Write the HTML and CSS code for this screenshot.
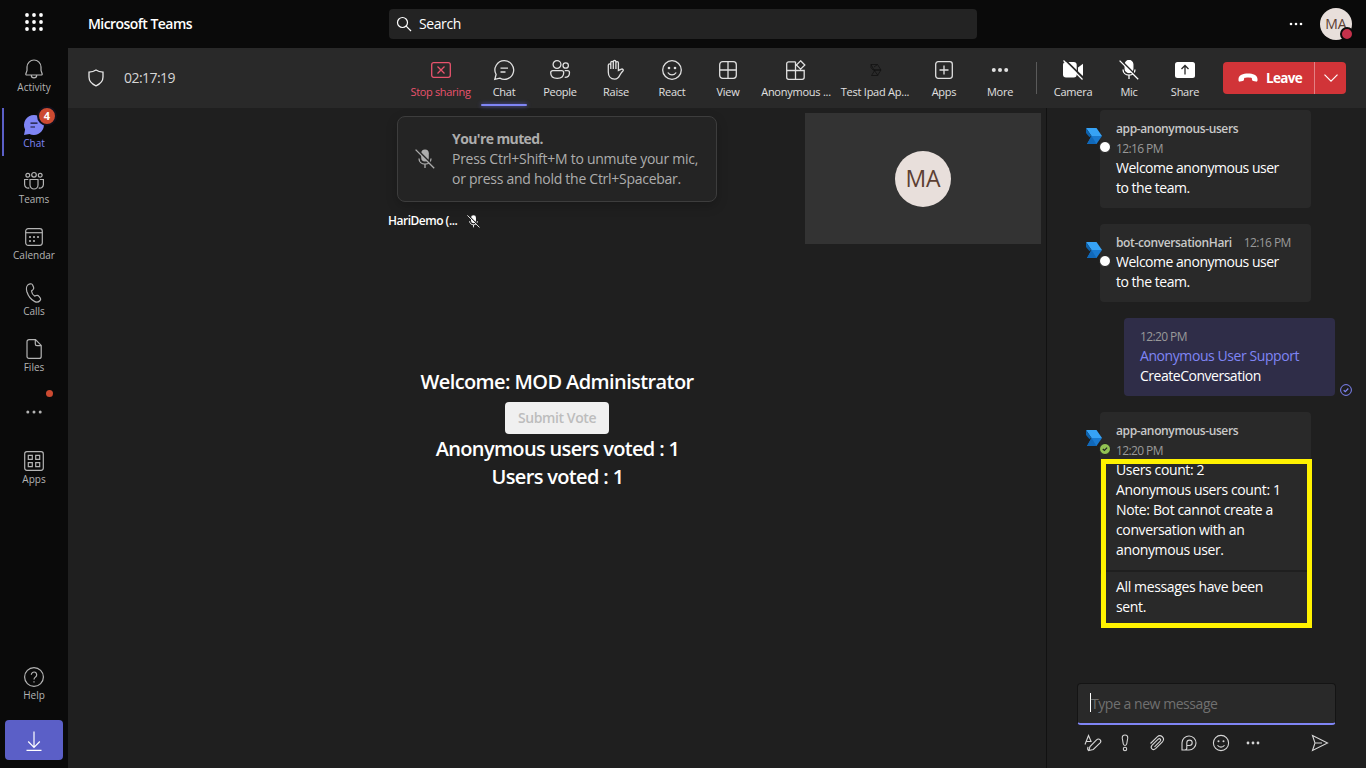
FILE: index.html
```
<!DOCTYPE html>
<html lang="en">
<head>
<meta charset="utf-8">
<title>Microsoft Teams</title>
<link rel="stylesheet" href="styles.css">
</head>
<body>
<svg class="defs" width="0" height="0">
  <symbol id="mic-off" viewBox="0 0 20 20">
    <rect x="6.2" y=".5" width="7.600" height="12" rx="3.800" fill="currentColor"/>
    <path d="M4 9.500c0 3.300 2.600 5.600 6 5.600s6-2.300 6-5.600M10 15v4" fill="none" stroke="currentColor" stroke-width="1.300"/>
    <path d="M1.600 0L20 18.400" stroke="#292929" stroke-width="1.800"/>
    <path d="M.6.6L19.200 19.200" stroke="currentColor" stroke-width="1.300"/>
  </symbol>
  <symbol id="bot" viewBox="0 0 16 16">
    <path d="M0 0h10.500L16 8H5.500z" fill="#36a2f5"/>
    <path d="M0 0v5l3.300 4L5.500 8z" fill="#0d62ad"/>
    <path d="M5.500 8H16l-5.500 8H1z" fill="#1979cf"/>
    <path d="M5.500 8L1 16h9.500z" fill="#1068b9"/>
  </symbol>
</svg>
<header class="topbar">
  <svg class="waffle" width="20" height="20" viewBox="0 0 20 20" fill="#fff"><circle cx="3" cy="3" r="1.900"/><circle cx="10" cy="3" r="1.900"/><circle cx="17" cy="3" r="1.900"/><circle cx="3" cy="10" r="1.900"/><circle cx="10" cy="10" r="1.900"/><circle cx="17" cy="10" r="1.900"/><circle cx="3" cy="17" r="1.900"/><circle cx="10" cy="17" r="1.900"/><circle cx="17" cy="17" r="1.900"/></svg>
  <div class="brand">Microsoft Teams</div>
  <div class="search">
    <svg width="16" height="16" viewBox="0 0 16 16" fill="none" stroke="#fff" stroke-width="1.200"><circle cx="6.500" cy="6.500" r="5"/><path d="M10.200 10.200L15 15"/></svg>
    <span>Search</span>
  </div>
  <svg class="topdots" width="14" height="4" viewBox="0 0 14 4" fill="#fff"><circle cx="2" cy="2" r="1.300"/><circle cx="7" cy="2" r="1.300"/><circle cx="12" cy="2" r="1.300"/></svg>
  <div class="avatar"><span>MA</span><i class="presence"></i></div>
</header>
<div class="app">
  <nav class="rail">
    <div class="nav"><svg width="20" height="20" viewBox="0 0 20 20"><path d="M3 8a7 7 0 0 1 14 0v3.500l1.200 3.500a.8.8 0 0 1-.8 1H2.600a.8.8 0 0 1-.8-1L3 11.500zM7.300 16.200a2.700 2.700 0 0 0 5.400 0"/></svg><span>Activity</span></div>
    <div class="nav active"><svg width="20" height="20" viewBox="0 0 20 20"><path class="fill" d="M10 0a10 10 0 1 1-4.600 18.900L0 20l1.100-5.400A10 10 0 0 1 10 0z"/><path class="ink" d="M6.500 8.200h7M6.500 12h4.500"/></svg><span>Chat</span><b class="badge">4</b></div>
    <div class="nav"><svg width="20" height="20" viewBox="0 0 20 20"><circle cx="10" cy="3.800" r="2.300"/><circle cx="3.800" cy="4.300" r="1.900"/><circle cx="16.200" cy="4.300" r="1.900"/><path d="M6 8.500h8v5.500a4 4 0 0 1-8 0zM4.300 8.500H.6v5a3.600 3.600 0 0 0 4.700 3.400M15.700 8.500h3.700v5a3.600 3.600 0 0 1-4.700 3.400"/></svg><span>Teams</span></div>
    <div class="nav"><svg width="20" height="20" viewBox="0 0 20 20"><rect x="1.700" y="1.700" width="16.600" height="16.600" rx="2.500"/><path d="M1.700 5.700h16.600"/><g class="fill"><circle cx="6" cy="10" r="1.100"/><circle cx="10" cy="10" r="1.100"/><circle cx="14" cy="10" r="1.100"/><circle cx="6" cy="14" r="1.100"/><circle cx="10" cy="14" r="1.100"/></g></svg><span>Calendar</span></div>
    <div class="nav"><svg width="20" height="20" viewBox="0 0 20 20"><path d="M5.200 1.100l1.300-.3c1-.2 1.700.2 2.100 1.100l1 2.300c.4 1 .1 1.700-.6 2.400L7.500 8c.2 1.800 1.700 4.100 3.100 5l2-.6c.9-.3 1.700 0 2.200.7l1.500 2c.6.8.4 1.700-.2 2.400-1.300 1.500-3.200 2.100-5.300 1.100C7.500 17 4.300 13.200 2.800 8.500c-.8-3-.2-6.500 2.400-7.400z"/></svg><span>Calls</span></div>
    <div class="nav"><svg width="20" height="20" viewBox="0 0 20 20"><path d="M5 .7h6.500l5.700 5.700v11a2 2 0 0 1-2 2H5a2 2 0 0 1-2-2V2.700a2 2 0 0 1 2-2zM11.300.7v4.200a1.700 1.700 0 0 0 1.700 1.700h4.200"/></svg><span>Files</span></div>
    <div class="nav more"><svg width="16" height="4" viewBox="0 0 16 4"><g class="fill"><circle cx="1.800" cy="2" r="1.500"/><circle cx="8" cy="2" r="1.500"/><circle cx="14.200" cy="2" r="1.500"/></g></svg><i class="dot"></i></div>
    <div class="nav"><svg width="20" height="20" viewBox="0 0 20 20"><rect x=".7" y=".7" width="18.600" height="18.600" rx="2.200"/><path d="M4.300 4.300h4v4h-4zM11.700 4.300h4v4h-4zM4.300 11.700h4v4h-4zM11.700 11.700h4v4h-4z"/></svg><span>Apps</span></div>
    <div class="nav help"><svg width="20" height="20" viewBox="0 0 20 20"><circle cx="10" cy="10" r="9.400"/><path d="M7.300 7.700a2.700 2.700 0 1 1 4.300 2.200c-1 .8-1.600 1.300-1.600 2.600M10 14.200v1.400"/></svg><span>Help</span></div>
    <div class="download"><svg width="16" height="20" viewBox="0 0 16 20" fill="none" stroke="#fff" stroke-width="1.200"><path d="M8 .5v15.500M2.200 10.500L8 16.300l5.800-5.800M.5 19.400h15"/></svg></div>
  </nav>
  <main class="main">
    <div class="toolbar">
      <svg class="shield" width="16" height="18" viewBox="0 0 16 18" fill="none" stroke="#e8e8e8" stroke-width="1.300"><path d="M8 1c2 1.400 4.300 2 7 2.100V8c0 4-2.400 6.800-7 8.800C3.400 14.800 1 12 1 8V3.100C3.700 3 6 2.400 8 1z"/></svg>
      <span class="timer">02:17:19</span>
      <div class="tool stop"><svg width="20" height="20" viewBox="0 0 20 20"><rect x=".7" y="2.700" width="18.600" height="14.600" rx="2"/><path d="M6.500 6.500l7 7M13.500 6.500l-7 7"/></svg><span>Stop sharing</span></div>
      <div class="tool current"><svg width="20" height="20" viewBox="0 0 20 20"><path d="M10.300.7a9.300 9.300 0 1 1-4.500 17.400L.8 19.300l1.300-4.800A9.300 9.300 0 0 1 10.300.7zM6.500 8.200h7.500M6.500 12h5"/></svg><span>Chat</span></div>
      <div class="tool"><svg width="20" height="20" viewBox="0 0 20 20"><circle cx="7" cy="4.500" r="3.900"/><circle cx="15.700" cy="5.500" r="2.700"/><path d="M2.700 10.700h9a2 2 0 0 1 2 2c0 3.500-2.500 5.600-6.500 5.600S.7 16.200.7 12.700a2 2 0 0 1 2-2zM14.700 10.700h2.800a2 2 0 0 1 2 2c0 3-1.700 4.700-4.800 4.700"/></svg><span>People</span></div>
      <div class="tool"><svg width="20" height="20" viewBox="0 0 20 20"><path d="M2.300 12V5.200c0-1.700 2.500-1.700 2.500 0V9M4.800 9V2.500C4.800.9 7.300.9 7.300 2.500V9M7.300 9V1.700c0-1.600 2.600-1.600 2.600 0V9M9.900 9V2.800c0-1.600 2.500-1.600 2.500 0v7.600l3.100-1.300c1.100-.4 2.300.8 1.600 1.600-1.700 1.500-2.400 2.600-3.200 4.400-1 2.400-2.500 4-5.300 4-4 0-6.300-2.900-6.300-7.100"/></svg><span>Raise</span></div>
      <div class="tool"><svg width="20" height="20" viewBox="0 0 20 20"><circle cx="10" cy="10" r="9.300"/><g class="fill"><circle cx="7" cy="8" r="1.300"/><circle cx="13" cy="8" r="1.300"/></g><path d="M5.800 12.500c2 3.200 6.400 3.200 8.400 0"/></svg><span>React</span></div>
      <div class="tool"><svg width="20" height="20" viewBox="0 0 20 20"><rect x="1.700" y="1.700" width="16.600" height="16.600" rx="3"/><path d="M10 1.700v16.600M1.700 10h16.600"/></svg><span>View</span></div>
      <div class="tool anon"><svg width="20" height="20" viewBox="0 0 20 20"><path d="M9.500 1.800H2.700a2 2 0 0 0-2 2v13.500a2 2 0 0 0 2 2h13.500a2 2 0 0 0 2-2v-6.800H.7M9.500 1.800v17.500M14.600.8l4.200 4.200-4.200 4.200L10.400 5z"/></svg><span>Anonymous ...</span></div>
      <div class="tool test"><svg width="20" height="20" viewBox="0 0 20 20"><path class="dark" d="M6 4.500h6.500L16 10H9zM6 4.500v3L8 10h8l-3.500 5.500H6.500L10 10M9 10l4 5.500M12.500 4.500L9 7"/></svg><span>Test Ipad Ap...</span></div>
      <div class="tool apps"><svg width="20" height="20" viewBox="0 0 20 20"><rect x="1.700" y="1.700" width="16.600" height="16.600" rx="2.500"/><path d="M10 5.500v9M5.500 10h9"/></svg><span>Apps</span></div>
      <div class="tool overflow"><svg width="20" height="20" viewBox="0 0 20 20"><g class="fill"><circle cx="3.800" cy="10" r="2"/><circle cx="10" cy="10" r="2"/><circle cx="16.200" cy="10" r="2"/></g></svg><span>More</span></div>
      <i class="divider"></i>
      <div class="tool device"><svg width="20" height="20" viewBox="0 0 20 20"><rect class="solid" y="2" width="13.700" height="15.500" rx="3"/><path class="solid" d="M15 7.500L20 3.700v12.600l-5-3.800z"/><path class="gap" d="M1.800-.3L20.500 18"/><path d="M.5.500l19 19"/></svg><span>Camera</span></div>
      <div class="tool device"><svg width="20" height="20"><use href="#mic-off"/></svg><span>Mic</span></div>
      <div class="tool device"><svg width="20" height="20" viewBox="0 0 20 20"><rect class="solid" y="2" width="20" height="16" rx="2.500"/><path class="up" d="M10 14.500V6M6.500 9L10 5.500 13.500 9"/></svg><span>Share</span></div>
      <div class="leave">
        <div class="hang"><svg width="20" height="10" viewBox="0 0 20 10"><path fill="#fff" d="M10 .5c4.800 0 9.500 1.700 9.500 5.500v1.300c0 1-.6 1.500-1.500 1.300l-2.700-.6c-.9-.2-1.200-.7-1.300-1.500l-.2-1.500C12 4.200 8 4.200 6.200 5L6 6.500C5.900 7.300 5.600 7.800 4.700 8L2 8.600C1.100 8.800.5 8.300.5 7.300V6C.5 2.200 5.200.5 10 .5z"/></svg><span>Leave</span></div>
        <div class="chev"><svg width="14" height="8" viewBox="0 0 14 8" fill="none" stroke="#fff" stroke-width="1.200"><path d="M.5.700L7 7.200 13.500.7"/></svg></div>
      </div>
    </div>
    <div class="content">
      <section class="stage">
        <div class="vote">
          <h2>Welcome: MOD Administrator</h2>
          <button class="submit" disabled>Submit Vote</button>
          <h2 class="count">Anonymous users voted : 1</h2>
          <h2 class="count">Users voted : 1</h2>
        </div>
        <div class="speaker"><span>HariDemo (...</span><svg width="13" height="13"><use href="#mic-off"/></svg></div>
        <div class="toast">
          <svg width="20" height="20"><use href="#mic-off"/></svg>
          <div><strong>You're muted.</strong><p>Press Ctrl+Shift+M to unmute your mic,</p><p>or press and hold the Ctrl+Spacebar.</p></div>
        </div>
        <div class="tile"><div class="bigavatar">MA</div></div>
      </section>
      <aside class="chat">
        <div class="messages">
          <article class="msg first">
            <svg class="bot" width="16" height="16"><use href="#bot"/></svg><i class="status"></i>
            <div class="author">app-anonymous-users</div><div class="time">12:16 PM</div>
            <div class="body"><p>Welcome anonymous user</p><p>to the team.</p></div>
          </article>
          <article class="msg second">
            <svg class="bot" width="16" height="16"><use href="#bot"/></svg><i class="status"></i>
            <div class="line"><div class="author">bot-conversationHari</div><div class="time">12:16 PM</div></div>
            <div class="body"><p>Welcome anonymous user</p><p>to the team.</p></div>
          </article>
          <article class="msg own">
            <div class="time">12:20 PM</div>
            <div class="body"><p class="mention">Anonymous User Support</p><p>CreateConversation</p></div>
            <svg class="seen" width="12" height="12" viewBox="0 0 12 12" fill="none" stroke="#7f85f5"><circle cx="6" cy="6" r="5.400"/><path d="M3.700 6.200l1.600 1.500 3-3.200" stroke-width="1.200"/></svg>
          </article>
          <article class="msg last">
            <svg class="bot" width="16" height="16"><use href="#bot"/></svg>
            <svg class="status online" viewBox="0 0 10 10"><path d="M2.800 5l1.600 1.500 2.700-2.800" fill="none" stroke="#222" stroke-width="1.200"/></svg>
            <div class="author">app-anonymous-users</div><div class="time">12:20 PM</div>
            <div class="body loose"><p>Users count: 2</p><p>Anonymous users count: 1</p><p>Note: Bot cannot create a</p><p>conversation with an</p><p>anonymous user.</p></div>
          </article>
          <article class="msg tail loose"><p>All messages have been</p><p>sent.</p></article>
          <div class="highlight"></div>
        </div>
        <div class="compose"><i class="caret"></i><span>Type a new message</span></div>
        <div class="actions">
          <svg width="18" height="18" viewBox="0 0 18 18"><path d="M1 10.500L4.500 1.500 7.300 8M2.200 7.500h4.500M4.800 16.500l1.200-4L12.800 5.700a2.200 2.200 0 0 1 3.300 3.100L9.300 15.500zM4.800 16.500c-1.500-.5-1.500-2.500-.5-3.500"/></svg>
          <svg width="18" height="18" viewBox="0 0 18 18"><path d="M9 1c2 0 3 1.400 2.700 3.400l-1 5.600c-.3 1.800-3.100 1.800-3.400 0l-1-5.600C6 2.400 7 1 9 1z"/><circle cx="9" cy="15" r="1.700"/></svg>
          <svg width="18" height="18" viewBox="0 0 18 18"><path d="M2.500 9.500L9.200 2.800c3.500-3.200 8.400 1.400 5.200 5l-6.800 6.900c-2.700 2.300-5.800-.7-3.700-3.400l6.300-6.200c1.700-1.300 3.400.5 2 2.100l-5.700 5.700"/></svg>
          <svg width="18" height="18" viewBox="0 0 18 18"><path d="M2 16V8.700a7 7 0 1 1 7 7.300zM2 16h2.800a2 2 0 0 0 2-2V8.700a2.700 2.700 0 1 1 2.700 2.800H7"/></svg>
          <svg width="18" height="18" viewBox="0 0 18 18"><circle cx="9" cy="9" r="7.600"/><path d="M5.500 11.300c1.700 2.400 5.300 2.400 7 0"/><g class="fill"><circle cx="6.500" cy="7.300" r="1"/><circle cx="11.500" cy="7.300" r="1"/></g></svg>
          <svg width="18" height="18" viewBox="0 0 18 18"><g class="fill"><circle cx="4" cy="9" r="1.400"/><circle cx="9" cy="9" r="1.400"/><circle cx="14" cy="9" r="1.400"/></g></svg>
          <svg class="send" width="18" height="18" viewBox="0 0 18 18"><path d="M1.500 1.500L16.500 9l-15 7.500L4 9zM4 9h7"/></svg>
        </div>
      </aside>
    </div>
  </main>
</div>
</body>
</html>
```
FILE: styles.css
```
* { box-sizing: border-box; }
body { margin: 0; width: 1366px; height: 768px; overflow: hidden; background: #0a0a0a; color: #fff; font-family: "Open Sans", "Noto Sans", sans-serif; font-size: 14px; display: flex; flex-direction: column; }
p, h2 { margin: 0; white-space: nowrap; }
span, .author, .time { white-space: nowrap; }
svg { flex: none; overflow: visible; }
.defs { display: none; }
i { font-style: normal; }

.topbar { height: 48px; flex: none; display: flex; align-items: center; }
.waffle { margin: -4px 0 0 24px; }
.brand { width: 301px; margin-left: 44px; padding-bottom: 1px; font-weight: 600; letter-spacing: -.55px; }
.search { width: 588px; height: 30px; border-radius: 4px; background: #232323; display: flex; align-items: center; gap: 7px; padding-left: 7px; letter-spacing: -.4px; }
.search span { padding-bottom: 1px; }
.topdots { margin-left: 312px; }
.avatar { position: relative; width: 32px; height: 32px; margin-left: 17px; border-radius: 50%; background: #e8dfdb; color: #5c4033; display: flex; align-items: center; justify-content: center; font-weight: 500; }
.avatar span { padding-bottom: 1px; }
.presence { position: absolute; right: -2px; bottom: -1px; width: 14px; height: 14px; border: 2px solid #0a0a0a; border-radius: 50%; background: #c4314b; }

.app { flex: 1; display: flex; min-height: 0; }
.rail { width: 68px; display: flex; flex-direction: column; }
.nav { position: relative; height: 56px; flex: none; padding-top: 11px; display: flex; flex-direction: column; align-items: center; color: #b4b4b4; font-size: 10px; line-height: 14px; gap: 1px; }
.nav svg { fill: none; stroke: currentColor; stroke-width: 1.2; }
.nav .fill, .tool .fill, .actions .fill { fill: currentColor; stroke: none; }
.active { color: #7f85f5; }
.active::before { content: ""; position: absolute; left: 2px; top: 4px; width: 2px; height: 48px; background: #5b5fc7; }
.nav .ink { stroke: #17172b; }
.badge { position: absolute; left: 37px; top: 2px; width: 20px; height: 20px; border: 2px solid #10101c; border-radius: 50%; background: #cc4a31; color: #fff; line-height: 16px; text-align: center; font-size: 11px; }
.more { padding-top: 26px; }
.dot { position: absolute; left: 46px; top: 6px; width: 7px; height: 7px; border-radius: 50%; background: #cc4a31; }
.help { margin-top: auto; height: 64px; }
.download { width: 58px; height: 40px; flex: none; margin: 0 0 8px 5px; border-radius: 4px; background: #5b5fc7; display: flex; align-items: center; justify-content: center; }
.download svg { margin-top: 2px; }

.main { width: 1298px; display: flex; flex-direction: column; }
.toolbar { height: 60px; flex: none; background: #292929; display: flex; align-items: center; }
.shield { margin-left: 20px; }
.timer { width: 280px; margin-left: 20px; padding-bottom: 2px; color: #d6d6d6; letter-spacing: -.55px; }
.tool { position: relative; width: 56px; height: 60px; flex: none; padding-top: 12px; display: flex; flex-direction: column; align-items: center; gap: 5px; font-size: 11px; line-height: 14px; letter-spacing: -.25px; color: #e0e0e0; }
.tool svg { fill: none; stroke: currentColor; stroke-width: 1.3; }
.stop { width: 72px; padding-left: 1px; color: #e8536d; letter-spacing: -.35px; }
.current::after { content: ""; position: absolute; left: 5px; bottom: 2px; width: 46px; height: 2px; border-radius: 1px; background: #7f85f5; box-shadow: 0 0 4px #5b5fc7; }
.anon { width: 80px; }
.test { width: 78px; }
.apps { width: 60px; }
.overflow { width: 52px; }
.tool .dark { stroke: #111; stroke-width: .8; }
.divider { width: 1px; height: 32px; margin: 0 8px 0 10px; background: #5a5a5a; }
.device svg { color: #fff; }
.tool .solid { fill: #fff; stroke: none; }
.tool .gap { stroke: #292929; stroke-width: 1.8; }
.tool .up { stroke: #292929; }
.leave { width: 123px; height: 32px; margin-left: 10px; border-radius: 4px; background: #d13438; display: flex; }
.hang { width: 92px; border-right: 1px solid #e38083; display: flex; align-items: center; gap: 8px; padding-left: 15px; font-weight: 700; font-size: 13.5px; letter-spacing: -.7px; }
.chev { flex: 1; display: flex; align-items: center; justify-content: center; }

.content { flex: 1; min-height: 0; display: flex; background: #1f1f1f; }
.stage { position: relative; width: 978px; display: flex; justify-content: center; }
.vote { display: flex; flex-direction: column; align-items: center; padding-top: 260px; height: 390px; }
h2 { font-size: 20px; line-height: 28px; font-weight: 600; letter-spacing: -.6px; }
.count { padding-left: 1px; letter-spacing: -.66px; }
.submit { width: 104px; height: 32px; margin: 6px 0 1px; padding: 0 0 2px; border: 0; border-radius: 4px; background: #f0f0f0; color: #bdbdbd; font: 600 14px "Open Sans", sans-serif; letter-spacing: -.4px; }
.speaker { position: absolute; left: 320px; top: 104px; display: flex; align-items: center; gap: 10px; font-size: 12px; font-weight: 600; line-height: 18px; letter-spacing: -.5px; }
.toast { position: absolute; left: 329px; top: 8px; width: 320px; height: 86px; border: 1px solid #3d3d3d; border-radius: 8px; background: #242424; color: #adadad; display: flex; align-items: center; gap: 17px; padding-left: 17px; line-height: 20px; box-shadow: 0 4px 12px #0003; }
.toast strong { display: block; letter-spacing: -.6px; }
.toast p { letter-spacing: -.27px; }
.tile { position: absolute; left: 737px; top: 5px; width: 236px; height: 131px; background: #333; display: flex; align-items: center; justify-content: center; }
.bigavatar { width: 56px; height: 56px; border-radius: 50%; background: #e8dfdb; color: #5c4033; font-size: 23px; font-weight: 500; line-height: 55px; text-align: center; }

.chat { width: 320px; border-left: 1px solid #111; display: flex; flex-direction: column; }
.messages { position: relative; height: 575px; padding: 2px 0 0 53px; }
.msg { position: relative; width: 211px; padding: 9px 16px 0; border-radius: 4px; background: #292929; line-height: 20px; }
.msg p { font-weight: 500; letter-spacing: -.48px; }
.msg .loose p, .msg.loose p { letter-spacing: -.37px; }
.body { margin-top: -1px; }
.first { height: 98px; margin-bottom: 16px; }
.second { height: 78px; margin-bottom: 16px; }
.own { left: 24px; height: 78px; margin-bottom: 16px; background: #2f2d48; }
.last { height: 158px; margin-bottom: 2px; border-radius: 4px 4px 0 0; }
.tail { height: 54px; padding-top: 5px; }
.author { font-size: 12px; font-weight: 600; color: #c8c8c8; letter-spacing: -.37px; }
.time { font-size: 12px; color: #999; letter-spacing: -.6px; }
.line { display: flex; gap: 12px; }
.bot { position: absolute; left: -14px; top: 18px; }
.status { position: absolute; left: -1px; top: 31px; width: 12px; height: 12px; border: 1px solid #1f1f1f; border-radius: 50%; background: #fff; }
.online { background: #92c353; }
.msg .mention { color: #7f85f5; font-weight: 400; letter-spacing: -.42px; }
.seen { position: absolute; right: -17px; bottom: 0; }
.highlight { position: absolute; left: 54px; top: 351px; width: 211px; height: 169px; border: 5px solid #fff200; }
.compose { width: 259px; height: 42px; margin-left: 30px; border: 1px solid #141414; border-bottom: 2px solid #7f85f5; border-radius: 4px; background: #292929; display: flex; align-items: center; padding-left: 12px; color: #707070; letter-spacing: -.45px; }
.caret { width: 1px; height: 19px; margin-top: -2px; background: #fff; }
.actions { display: flex; gap: 14px; padding: 9px 0 0 37px; color: #d6d6d6; }
.actions svg { fill: none; stroke: currentColor; stroke-width: 1.1; }
.send { margin-left: 35px; }
```
